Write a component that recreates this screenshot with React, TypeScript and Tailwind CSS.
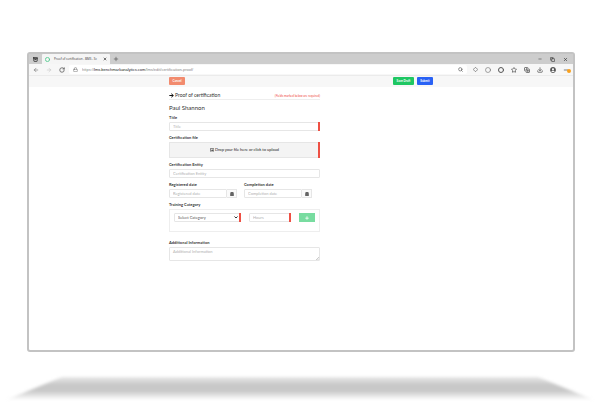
import type { ReactNode } from "react";
import {
  Archive,
  ArrowLeft,
  ArrowRight,
  Circle,
  Copy,
  CopyPlus,
  Diamond,
  Download,
  Lock,
  Minus,
  Plus,
  RotateCw,
  Search,
  Star,
  X,
} from "lucide-react";
import { FaArrowRight, FaCalendarAlt, FaPlus, FaRegImage, FaUserCircle } from "react-icons/fa";

const inputClass =
  "block h-[9px] w-full min-w-0 appearance-none rounded-[1px] border border-[#e6e6e6] bg-white px-[3px] text-[4px] leading-[7px] text-[#555] placeholder:text-[#b0b0b0] outline-none";

export default function App() {
  return (
    <div className="min-h-screen bg-white pt-[52px] font-['Lato',sans-serif]">
      <div className="mr-[25px] ml-[27px] rounded-[3px] border-2 border-[#c3c3c3] bg-white">
        <TabStrip />
        <Toolbar />
        <CertificationPage />
      </div>
      <Shadow />
    </div>
  );
}

function TabStrip() {
  return (
    <div className="flex h-[10px] items-stretch bg-[#cdcdcd] text-[#333]">
      <div className="flex w-[13px] items-center justify-center">
        <Archive className="size-[5px]" strokeWidth={4} />
      </div>
      <div className="flex w-[68px] items-center gap-[4px] rounded-t-[1px] bg-[#f5f5f5] px-[3px]">
        <Circle className="size-[5px] shrink-0 text-[#4cc98a]" strokeWidth={4} />
        <span className="min-w-0 flex-1 whitespace-nowrap font-['Open_Sans',sans-serif] text-[3px] leading-[6px]">
          Proof of certification - BMS - Sc
        </span>
        <button type="button" aria-label="Close tab">
          <X className="size-[4px]" strokeWidth={4} />
        </button>
      </div>
      <button type="button" aria-label="New tab" className="ml-[3px]">
        <Plus className="size-[6px]" strokeWidth={2} />
      </button>
      <div className="ml-auto flex items-center gap-[8px] pr-[5px]">
        <Minus className="size-[4px]" strokeWidth={3} />
        <Copy className="size-[5px]" strokeWidth={3} />
        <X className="size-[5px]" strokeWidth={3} />
      </div>
    </div>
  );
}

function Toolbar() {
  return (
    <div className="flex h-[11px] items-center bg-[#f7f7f7] text-[#555]">
      <div className="flex items-center gap-[7px] px-[4px]">
        <ArrowLeft className="size-[6px]" strokeWidth={2} />
        <ArrowRight className="size-[6px] text-[#bbb]" strokeWidth={2} />
        <RotateCw className="size-[6px]" strokeWidth={3} />
      </div>
      <div className="flex h-[9px] min-w-0 flex-1 items-center gap-[4px] rounded-[2px] bg-white px-[4px]">
        <Lock className="size-[5px] shrink-0" strokeWidth={2} />
        <span className="flex-1 truncate font-['Liberation_Sans',sans-serif] text-[4px] leading-[6px] text-[#888]">
          https://<span className="text-[#222]">lms.benchmarkanalytics.com</span>
          /lms/edit/certification-proof/
        </span>
        <Search className="size-[5px] shrink-0" strokeWidth={3} />
      </div>
      <div className="flex items-center gap-[7px] pr-[4px] pl-[6px]">
        <Diamond className="size-[5px]" strokeWidth={3} />
        <Circle className="size-[6px]" strokeWidth={2} />
        <Circle className="size-[6px]" strokeWidth={4} />
        <Star className="size-[6px]" strokeWidth={3} />
        <CopyPlus className="size-[6px]" strokeWidth={3} />
        <Download className="size-[6px]" strokeWidth={3} />
        <FaUserCircle className="size-[6px]" />
        <span className="relative">
          <Minus className="size-[6px]" strokeWidth={3} />
          <span className="absolute top-[2px] left-[4px] size-[4px] rounded-full bg-[#f9a01b]" />
        </span>
      </div>
    </div>
  );
}

function CertificationPage() {
  return (
    <form className="text-[#333]">
      <div className="border-t border-[#ebebeb] bg-[#f7f7f7]">
        <div className="mx-auto flex h-[11px] w-[264px] max-w-full items-start gap-[3px] pt-px">
          <ActionButton className="mr-auto w-[16px] bg-[#f28b6e]">Cancel</ActionButton>
          <ActionButton className="w-[21px] bg-[#1fc763]">Save Draft</ActionButton>
          <ActionButton className="w-[16px] bg-[#2962f5]">Submit</ActionButton>
        </div>
      </div>

      <div className="mx-auto w-[264px] max-w-full pt-[5px] pb-[84px]">
        <div className="w-[151px]">
          <div className="flex items-center justify-between border-b border-[#eee]">
            <h1 className="flex items-center gap-[1px] text-[5px] leading-[7px]">
              <FaArrowRight className="size-[5px] text-[#111]" />
              Proof of certification
            </h1>
            <span className="text-[3px] leading-[4px] text-[#f0483e]">
              (Fields marked below are required)
            </span>
          </div>
          <h2 className="mt-[4px] mb-[4px] text-[6px] leading-[8px]">Paul Shannon</h2>

          <Field id="title" label="Title">
            <input id="title" placeholder="Title" className={inputClass} />
            <Required />
          </Field>

          <Field id="file" label="Certification file">
            <button
              id="file"
              type="button"
              className="flex h-[16px] w-full items-center justify-center gap-[1px] border border-[#e6e6e6] bg-[#f4f4f4] text-[4px] leading-[6px] text-[#222]"
            >
              <FaRegImage className="size-[4px]" />
              Drop your file here or click to upload
            </button>
            <Required />
          </Field>

          <Field id="entity" label="Certification Entity">
            <input id="entity" placeholder="Certification Entity" className={inputClass} />
          </Field>

          <div className="flex gap-[7px]">
            <DateField id="registered" label="Registered date" />
            <DateField id="completion" label="Completion date" />
          </div>

          <fieldset>
            <legend className="mb-[2px] text-[4px] leading-[4px] font-bold">
              Training Category
            </legend>
            <div className="flex h-[23px] items-start border border-[#eee] px-[4px] pt-[3px]">
              <div className="relative w-[67px]">
                <select aria-label="Category" className={inputClass}>
                  <option>Select Category</option>
                </select>
                <svg
                  className="pointer-events-none absolute top-[3px] right-[3px] h-[3px] w-[4px]"
                  viewBox="0 0 8 6"
                >
                  <path d="M1 1L4 4L7 1" fill="none" stroke="#333" strokeWidth="2" />
                </svg>
                <Required />
              </div>
              <div className="relative ml-[8px] w-[42px]">
                <input aria-label="Hours" placeholder="Hours" className={inputClass} />
                <Required />
              </div>
              <button
                type="button"
                aria-label="Add category"
                className="ml-auto flex h-[9px] w-[16px] items-center justify-center bg-[#78dca0] text-white"
              >
                <FaPlus className="size-[4px]" />
              </button>
            </div>
          </fieldset>

          <div className="mt-[9px]">
            <Field id="info" label="Additional Information">
              <textarea
                id="info"
                placeholder="Additional Information"
                className="block h-[14px] w-full resize-none rounded-[1px] border border-[#e6e6e6] px-[3px] py-[1px] text-[4px] leading-[5px] placeholder:text-[#b0b0b0] outline-none"
              />
              <svg className="absolute right-[1px] bottom-[1px] size-[3px]" viewBox="0 0 6 6">
                <path d="M0 6L6 0M3 6L6 3" stroke="#999" />
              </svg>
            </Field>
          </div>
        </div>
      </div>
    </form>
  );
}

function ActionButton({ className, children }: { className: string; children: ReactNode }) {
  return (
    <button
      type="button"
      className={`h-[8px] rounded-[1px] text-center text-[3px] leading-[8px] font-bold whitespace-nowrap text-white ${className}`}
    >
      {children}
    </button>
  );
}

function Field({ id, label, children }: { id: string; label: string; children: ReactNode }) {
  return (
    <div className="mb-[5px]">
      <label htmlFor={id} className="mb-[2px] block text-[4px] leading-[4px] font-bold">
        {label}
      </label>
      <div className="relative">{children}</div>
    </div>
  );
}

function DateField({ id, label }: { id: string; label: string }) {
  return (
    <div className="w-[68px]">
      <Field id={id} label={label}>
        <div className="flex">
          <input id={id} placeholder={label} className={inputClass} />
          <button
            type="button"
            aria-label={`Pick ${label.toLowerCase()}`}
            className="flex h-[9px] w-[10px] shrink-0 items-center justify-center border border-l-0 border-[#e6e6e6] bg-[#fafafa]"
          >
            <FaCalendarAlt className="size-[4px]" />
          </button>
        </div>
      </Field>
    </div>
  );
}

function Required() {
  return <span className="absolute inset-y-0 right-0 w-[2px] bg-[#ee5044]" />;
}

// Floor shadow under the browser window
function Shadow() {
  return (
    <svg className="mt-[16px] block h-[34px] w-full" viewBox="0 0 600 34" preserveAspectRatio="none">
      <defs>
        <linearGradient id="floor" x1="0" y1="0" x2="0" y2="1">
          <stop offset="0" stopColor="#c8c8c8" stopOpacity="0.4" />
          <stop offset="0.35" stopColor="#c8c8c8" />
          <stop offset="0.6" stopColor="#c8c8c8" />
          <stop offset="1" stopColor="#c8c8c8" stopOpacity="0" />
        </linearGradient>
        <filter id="soft" x="-5%" y="-30%" width="110%" height="160%">
          <feGaussianBlur stdDeviation="1.5" />
        </filter>
      </defs>
      <path d="M62 9H538L594 32H6Z" fill="url(#floor)" filter="url(#soft)" />
    </svg>
  );
}
